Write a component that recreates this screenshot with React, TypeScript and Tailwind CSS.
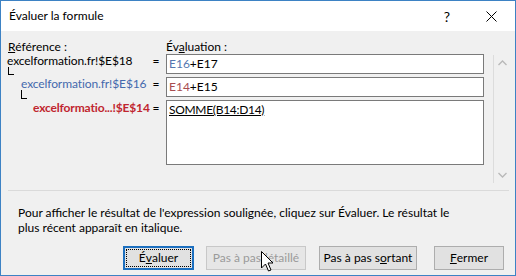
import React from "react"

const font = { fontFamily: 'Lato, "Noto Sans", "Liberation Sans", sans-serif' }

function Btn({
  children,
  w,
  focused,
  disabled,
}: {
  children: React.ReactNode
  w: string
  focused?: boolean
  disabled?: boolean
}) {
  if (focused) {
    return (
      <div className={`${w} h-[24px] border-2 border-[#1c6fbf] bg-[#e1e1e1] p-[1px]`}>
        <div className="w-full h-full border border-dotted border-black flex items-center justify-center text-black whitespace-nowrap">
          {children}
        </div>
      </div>
    )
  }
  return (
    <div
      className={`${w} h-[24px] border flex items-center justify-center whitespace-nowrap ${
        disabled ? "border-[#c8c8c8] bg-[#e6e6e6] text-[#9a9a9a]" : "border-[#adadad] bg-[#e1e1e1] text-black"
      }`}
    >
      {children}
    </div>
  )
}

export default function App() {
  return (
    <div
      className="w-[516px] h-[276px] border border-[#3d82c4] flex flex-col text-[12px] text-black overflow-hidden"
      style={font}
    >
      {/* title bar */}
      <div className="h-[30px] bg-white flex items-center pl-[8px] pr-[12px]">
        <span className="flex-1">Évaluer la formule</span>
        <span className="text-[14px] mr-[36px]">?</span>
        <svg width="11" height="11" viewBox="0 0 11 11" className="mr-[6px]">
          <path d="M0.5 0.5 L10.5 10.5 M10.5 0.5 L0.5 10.5" stroke="#000" strokeWidth="1" />
        </svg>
      </div>

      {/* body */}
      <div className="flex-1 bg-[#f0f0f0] flex flex-col pt-[8px] pl-[6px] pr-[6px] relative">
        <div className="flex leading-[15px]">
          <div className="w-[159px] pl-[1px]">
            <span className="underline">R</span>éférence :
          </div>
          <div>
            Év<span className="underline">a</span>luation :
          </div>
        </div>

        <div className="flex items-start">
          <div className="flex flex-col">
            {/* row 1 */}
            <div className="flex h-[20px]">
              <div className="w-[142px] leading-[14px] whitespace-nowrap tracking-[-0.1px]">excelformation.fr!$E$18</div>
              <div className="w-[14px] leading-[14px] text-center">=</div>
              <div className="ml-[3px] w-[318px] h-[20px] border border-[#7a7a7a] bg-white pl-[2px] leading-[17px]">
                <span className="text-[#5577b0]">E16</span>+E17
              </div>
            </div>
            {/* row 2 */}
            <div className="flex h-[20px] mt-[3px]">
              <div className="w-[142px] leading-[14px] relative pl-[14px] text-[#4469ad] whitespace-nowrap tracking-[-0.1px]">
                <span className="absolute left-[1px] top-[-10px] w-[6px] h-[8px] border-l border-b border-black" />
                excelformation.fr!$E$16
              </div>
              <div className="w-[14px] leading-[14px] text-center">=</div>
              <div className="ml-[3px] w-[318px] h-[20px] border border-[#7a7a7a] bg-white pl-[2px] leading-[17px]">
                <span className="text-[#a84c4f]">E14</span>+E15
              </div>
            </div>
            {/* row 3 */}
            <div className="flex h-[65px] mt-[3px]">
              <div className="w-[142px] leading-[14px] relative pl-[26px] pt-[1px] font-bold text-[#c0262f] whitespace-nowrap tracking-[-0.15px]">
                <span className="absolute left-[14px] top-[-10px] w-[6px] h-[9px] border-l border-b border-black" />
                excelformatio...!$E$14
              </div>
              <div className="w-[14px] leading-[14px] pt-[1px] text-center">=</div>
              <div className="ml-[3px] w-[318px] h-[65px] border border-[#7a7a7a] bg-white pl-[2px] leading-[17px]">
                <span className="underline tracking-[-0.3px]">SOMME(B14:D14)</span>
              </div>
            </div>
          </div>

          {/* scrollbar */}
          <div className="ml-[9px] mt-[1px] h-[128px] w-[16px] border-l border-[#dcdcdc] flex flex-col items-center justify-between py-[5px] pl-[2px]">
            <svg width="9" height="6" viewBox="0 0 9 6">
              <path d="M0.5 5 L4.5 1 L8.5 5" stroke="#b8b8b8" strokeWidth="1.3" fill="none" />
            </svg>
            <svg width="9" height="6" viewBox="0 0 9 6">
              <path d="M0.5 1 L4.5 5 L8.5 1" stroke="#b8b8b8" strokeWidth="1.3" fill="none" />
            </svg>
          </div>
        </div>

        <div className="mt-[7px] ml-[1px] border-t border-[#dadada]" />

        <div className="mt-[14px] pl-[11px] leading-[15px] pr-[50px]">
          Pour afficher le résultat de l'expression soulignée, cliquez sur Évaluer. Le résultat le plus récent
          apparaît en italique.
        </div>

        <div className="mt-[11px] flex pl-[116px]">
          <Btn w="w-[71px]" focused>
            É<span className="underline">v</span>aluer
          </Btn>
          <div className="ml-[12px]">
            <Btn w="w-[100px]" disabled>
              Pas à pas <span className="underline">d</span>étaillé
            </Btn>
          </div>
          <div className="ml-[13px]">
            <Btn w="w-[98px]">
              Pas à pas s<span className="underline">o</span>rtant
            </Btn>
          </div>
          <div className="ml-[17px]">
            <Btn w="w-[70px]">
              <span className="underline">F</span>ermer
            </Btn>
          </div>
        </div>

        {/* mouse cursor */}
        <svg
          className="absolute left-[260px] top-[220px]"
          width="13"
          height="21"
          viewBox="0 0 13 21"
        >
          <path
            d="M0.5 0.5 L0.5 17 L4.5 13 L7.5 20 L10 19 L7 12 L12 12 Z"
            fill="#fff"
            stroke="#000"
            strokeWidth="1"
            strokeLinejoin="miter"
          />
        </svg>
      </div>
    </div>
  )
}
